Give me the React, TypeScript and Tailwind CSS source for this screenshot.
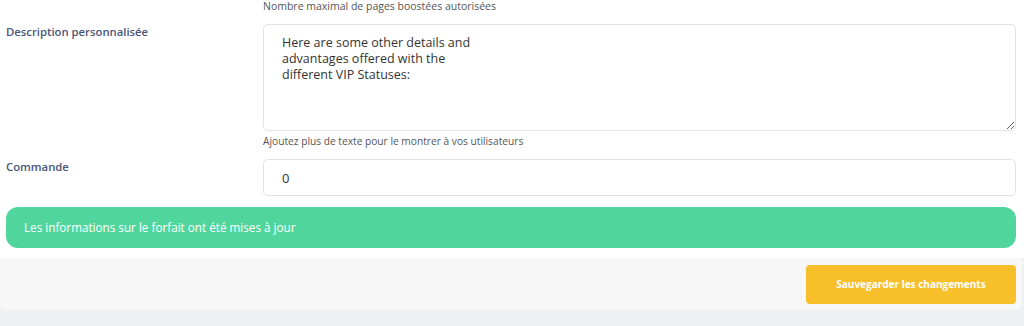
import React, { useState } from 'react';

const font = { fontFamily: '"Open Sans", "Liberation Sans", sans-serif' };

export default function App() {
  const [description, setDescription] = useState(
    'Here are some other details and\nadvantages offered with the\ndifferent VIP Statuses:'
  );
  const [order, setOrder] = useState('0');

  return (
    <div className="w-full h-[326px] bg-[#eef0f4] overflow-hidden" style={font}>
      <div className="bg-white pl-[6px] pr-[8px] pb-[10px]">
        <div className="flex">
          <div className="w-[257px]" />
          <p className="flex-1 text-[10.5px] leading-[12px] text-[#555]">
            Nombre maximal de pages boostées autorisées
          </p>
        </div>

        <div className="flex mt-[12px]">
          <label className="w-[257px] pt-[1px] text-[11.3px] leading-[14px] font-semibold text-[#4a5577]">
            Description personnalisée
          </label>
          <div className="flex-1">
            <textarea
              value={description}
              onChange={(e) => setDescription(e.target.value)}
              className="block w-full h-[107px] border border-[#e3e3e3] rounded-[5px] pl-[18px] pr-3 pt-[10px] text-[12.5px] leading-[16px] text-[#333] resize-y outline-none"
            />
            <p className="mt-[4px] text-[10.2px] leading-[12px] text-[#555]">
              Ajoutez plus de texte pour le montrer à vos utilisateurs
            </p>
          </div>
        </div>

        <div className="flex mt-[12px]">
          <label className="w-[257px] pt-[1px] text-[11.3px] leading-[14px] font-semibold text-[#4a5577]">
            Commande
          </label>
          <input
            value={order}
            onChange={(e) => setOrder(e.target.value)}
            className="flex-1 h-[37px] border border-[#e3e3e3] rounded-[5px] pl-[18px] text-[13px] text-[#333] outline-none"
          />
        </div>

        <div className="mt-[11px] h-[41px] rounded-[12px] bg-[#50d69d] flex items-center pl-[18px]">
          <span className="text-[11.7px] text-white">Les informations sur le forfait ont été mises à jour</span>
        </div>
      </div>

      <div className="mr-[2px] h-[52px] bg-[#f7f7f7] rounded-b-[6px] flex items-center justify-end pr-[6px]">
        <button className="w-[210px] h-[39px] rounded-[4px] bg-[#f7c02b] text-white text-[10px] font-bold">
          Sauvegarder les changements
        </button>
      </div>
    </div>
  );
}
